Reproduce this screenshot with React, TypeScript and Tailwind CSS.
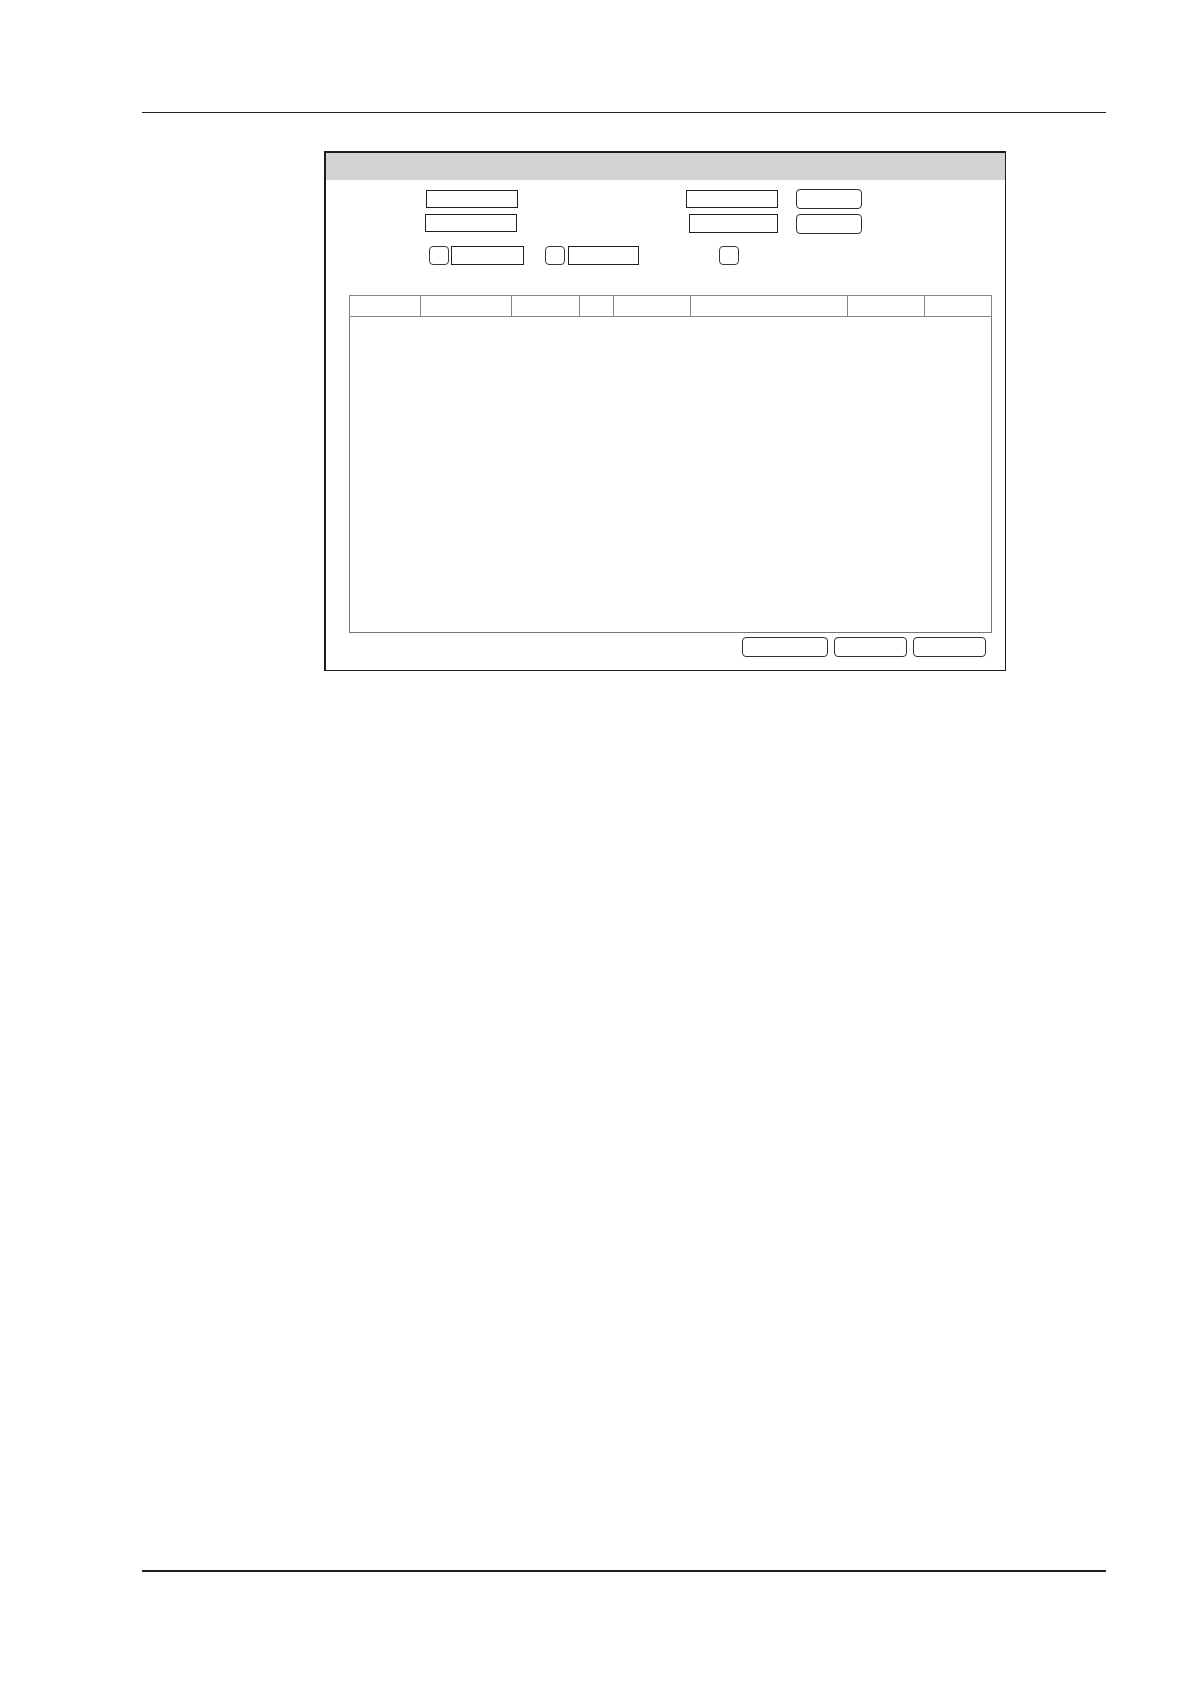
import type { ComponentProps } from "react";

const columns = [
  { name: "Column 1", width: "w-[71px]" },
  { name: "Column 2", width: "w-[91px]" },
  { name: "Column 3", width: "w-[68px]" },
  { name: "Column 4", width: "w-[34px]" },
  { name: "Column 5", width: "w-[77px]" },
  { name: "Column 6", width: "w-[157px]" },
  { name: "Column 7", width: "w-[77px]" },
  { name: "Column 8", width: "w-[67px]" },
];

function Field({ className = "", ...props }: ComponentProps<"input">) {
  return (
    <input
      type="text"
      className={`block min-w-0 shrink-0 border border-[#231f20] bg-white px-1 text-xs ${className}`}
      {...props}
    />
  );
}

function Check({ className = "", ...props }: ComponentProps<"input">) {
  return (
    <input
      type="checkbox"
      className={`block h-[19px] w-5 shrink-0 appearance-none rounded border border-[#3a3739] bg-white checked:bg-[#3a3739] ${className}`}
      {...props}
    />
  );
}

function Button({ className = "", ...props }: ComponentProps<"button">) {
  return (
    <button
      type="button"
      className={`block h-5 shrink-0 rounded border border-[#312e30] bg-white text-xs ${className}`}
      {...props}
    />
  );
}

function DialogWindow() {
  return (
    <section
      aria-label="Dialog"
      className="mt-[38px] mr-[100px] ml-[182px] border-t-2 border-r border-b border-l-2 border-[#1d1b1c]"
    >
      <header className="h-[27px] bg-[#d3d3d3]" />
      <form className="pt-[9px]">
        <div className="flex items-center pl-[100px]">
          <Field aria-label="Field 1" className="h-[18px] w-[92px]" />
          <Field aria-label="Field 2" className="ml-[168px] h-[18px] w-[92px]" />
          <Button aria-label="Action 1" className="ml-[18px] w-[66px]" />
        </div>
        <div className="mt-[5px] flex items-start pl-[99px]">
          <Field aria-label="Field 3" className="h-[18px] w-[92px]" />
          <Field aria-label="Field 4" className="ml-[172px] h-[19px] w-[89px]" />
          <Button aria-label="Action 2" className="ml-[18px] w-[66px]" />
        </div>
        <div className="mt-3 flex items-center pl-[103px]">
          <Check aria-label="Option 1" />
          <Field aria-label="Option 1 value" className="ml-0.5 h-[19px] w-[73px]" />
          <Check aria-label="Option 2" className="ml-[21px]" />
          <Field aria-label="Option 2 value" className="ml-[3px] h-[19px] w-[71px]" />
          <Check aria-label="Option 3" className="ml-20" />
        </div>
      </form>
      <div className="mt-[30px] mr-[13px] ml-[23px]">
        <table className="w-full table-fixed border-collapse border border-[#858585]">
          <thead>
            <tr className="h-[21px]">
              {columns.map((column) => (
                <th
                  key={column.name}
                  scope="col"
                  aria-label={column.name}
                  className={`border border-[#858585] p-0 ${column.width}`}
                />
              ))}
            </tr>
          </thead>
          <tbody>
            <tr className="h-[316px]">
              <td colSpan={8} className="border border-[#777777] p-0" />
            </tr>
          </tbody>
        </table>
      </div>
      <footer className="mt-1 mr-[19px] mb-[13px] flex justify-end gap-1.5">
        <Button aria-label="Action 3" className="w-[86px]" />
        <Button aria-label="Action 4" className="w-[73px]" />
        <Button aria-label="Action 5" className="w-[73px]" />
      </footer>
    </section>
  );
}

export default function App() {
  return (
    <main className="flex min-h-screen flex-col bg-white pt-28 pr-[85px] pb-28 pl-[142px] font-['Liberation_Sans',sans-serif] text-black">
      <hr className="border-t border-[#231f20]" />
      <DialogWindow />
      <hr className="mt-auto border-t-2 border-[#231f20]" />
    </main>
  );
}
